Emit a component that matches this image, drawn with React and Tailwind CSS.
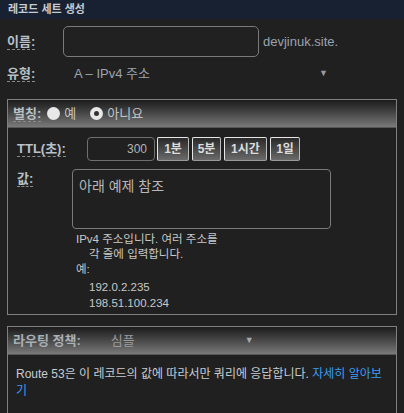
import React from 'react'

const font = { fontFamily: '"Liberation Sans", "Noto Sans CJK KR", sans-serif' }

const Label = ({ children, className = '' }) => (
  <span className={`inline-block border-b border-dashed border-[#8a8a8a] font-bold leading-[15px] text-[#b9c0c8] ${className}`}>
    {children}
  </span>
)

const TimeButton = ({ children, w }) => (
  <button className={`h-[24px] ${w} rounded-[2px] border border-t-[#e6e6e6] border-l-[#e6e6e6] border-r-[#bbbbbb] border-b-[#999] bg-gradient-to-b from-[#2a2a2a] to-[#6a6a6a] text-[12px] font-bold text-[#dcdcdc]`}>
    {children}
  </button>
)

const Header = ({ children }) => (
  <div className="flex h-[28px] items-center border-b border-[#555] bg-gradient-to-b from-[#1c1c1c] to-[#7a7a7a] px-[5px]">
    {children}
  </div>
)

export default function App() {
  return (
    <div style={font} className="h-[413px] w-[404px] overflow-hidden bg-[#202020] text-[#b4b4b4]">
      <div className="flex h-[19px] items-center bg-[#182131] px-[8px] text-[11px] font-bold text-[#c8ccd2]">
        레코드 세트 생성
      </div>

      <div className="mt-[7px] flex items-center">
        <div className="w-[63px] pl-[7px] text-[13px]">
          <Label>이름:</Label>
        </div>
        <div className="h-[31px] w-[196px] rounded-[5px] border border-[#7a7a7a] bg-[#212121]" />
        <span className="ml-[4px] text-[13px] text-[#9aa3ad]">devjinuk.site.</span>
      </div>

      <div className="flex h-[34px] items-center">
        <div className="w-[74px] pl-[7px] text-[13px]">
          <Label>유형:</Label>
        </div>
        <span className="text-[13px] text-[#9ba5b0]">A – IPv4 주소</span>
        <span className="ml-auto mr-[76px] text-[9px] text-[#9a9a9a]">▼</span>
      </div>

      <div className="mx-[7px] mt-[8px] h-[216px] border border-[#808080]">
        <Header>
          <Label className="text-[13px] text-[#b0b8c2]">별칭:</Label>
          <span className="ml-[6px] h-[13px] w-[13px] rounded-full bg-[#e8e8e8]" />
          <span className="ml-[4px] text-[13px] text-[#c4c4c4]">예</span>
          <span className="ml-[14px] flex h-[13px] w-[13px] items-center justify-center rounded-full bg-[#e8e8e8]">
            <span className="h-[5px] w-[5px] rounded-full bg-[#333]" />
          </span>
          <span className="ml-[4px] text-[13px] text-[#c4c4c4]">아니요</span>
        </Header>

        <div className="mt-[9px] flex items-center">
          <div className="w-[79px] pl-[9px] text-[13px]">
            <Label>TTL(초):</Label>
          </div>
          <div className="flex h-[24px] w-[68px] items-center justify-end rounded-[4px] border border-[#6f6f6f] pr-[7px] text-[12px] text-[#b4b4b4]">
            300
          </div>
          <div className="ml-[2px] flex gap-[3px]">
            <TimeButton w="w-[32px]">1분</TimeButton>
            <TimeButton w="w-[29px]">5분</TimeButton>
            <TimeButton w="w-[43px]">1시간</TimeButton>
            <TimeButton w="w-[30px]">1일</TimeButton>
          </div>
        </div>

        <div className="mt-[8px] flex items-start">
          <div className="w-[64px] pl-[9px] text-[13px]">
            <Label>값:</Label>
          </div>
          <div className="h-[60px] w-[259px] rounded-[4px] border border-[#7a7a7a] px-[6px] pt-[6px] text-[14px] text-[#b8b8b8]">
            아래 예제 참조
          </div>
        </div>

        <div className="ml-[68px] mt-[3px] text-[11.5px] leading-[15px] text-[#c8c8c8]">
          <div>IPv4 주소입니다. 여러 주소를</div>
          <div className="pl-[13px]">각 줄에 입력합니다.</div>
          <div>예:</div>
          <div className="mt-[2px] pl-[13px] leading-[16px]">192.0.2.235</div>
          <div className="pl-[13px] leading-[16px]">198.51.100.234</div>
        </div>
      </div>

      <div className="mx-[7px] mt-[11px] h-[120px] border border-[#808080]">
        <Header>
          <span className="text-[13px] font-bold text-[#a8b0b8]">라우팅 정책:</span>
          <span className="ml-[30px] text-[13px] text-[#9a9a9a]">심플</span>
          <span className="ml-[110px] text-[9px] text-[#a8a8a8]">▼</span>
        </Header>
        <div className="px-[8px] pt-[11px] text-[12px] leading-[17px] text-[#c8cdd2]">
          Route 53은 이 레코드의 값에 따라서만 쿼리에 응답합니다.{' '}
          <a className="text-[#3d9df5]">자세히 알아보기</a>
        </div>
      </div>
    </div>
  )
}
